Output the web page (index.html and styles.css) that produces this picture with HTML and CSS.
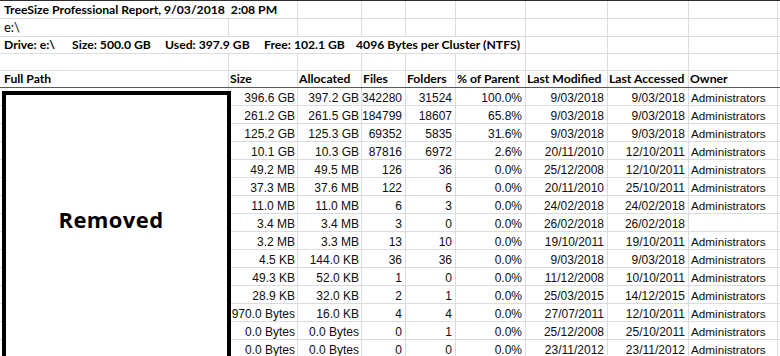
FILE: index.html
```html
<!DOCTYPE html>
<html>
<head>
<meta charset="utf-8">
<link rel="stylesheet" href="styles.css">
</head>
<body>
<div class="sheet">
  <div class="row r18 cal">
    <div class="cell span2 pa bold">TreeSize Professional Report, 9/03/2018  2:08 PM</div>
    <div class="cell"></div><div class="cell"></div><div class="cell"></div><div class="cell"></div><div class="cell"></div><div class="cell"></div><div class="cell"></div>
  </div>
  <div class="row r18 cal">
    <div class="cell pa big">e:\</div>
    <div class="cell"></div><div class="cell"></div><div class="cell"></div><div class="cell"></div><div class="cell"></div><div class="cell"></div><div class="cell"></div><div class="cell"></div>
  </div>
  <div class="row r17 cal">
    <div class="cell span6 pa bold drive"><span class="d1">Drive: e:\</span><span class="d2">Size: 500.0 GB</span><span class="d3">Used: 397.9 GB</span><span class="d4">Free: 102.1 GB</span><span>4096 Bytes per Cluster (NTFS)</span></div>
    <div class="cell"></div><div class="cell"></div><div class="cell"></div><div class="cell"></div>
  </div>
  <div class="row r17">
    <div class="cell"></div><div class="cell"></div><div class="cell"></div><div class="cell"></div><div class="cell"></div><div class="cell"></div><div class="cell"></div><div class="cell"></div><div class="cell"></div>
  </div>
  <div class="row r17 cal head">
    <div class="cell pa">Full Path</div>
    <div class="cell ph">Size</div>
    <div class="cell ph">Allocated</div>
    <div class="cell ph">Files</div>
    <div class="cell ph">Folders</div>
    <div class="cell ph">% of Parent</div>
    <div class="cell ph">Last Modified</div>
    <div class="cell ph">Last Accessed</div>
    <div class="cell ph">Owner</div>
  </div>

  <div class="row data"><div class="cell"></div><div class="cell num">396.6 GB</div><div class="cell num">397.2 GB</div><div class="cell num">342280</div><div class="cell num">31524</div><div class="cell num">100.0%</div><div class="cell num">9/03/2018</div><div class="cell num">9/03/2018</div><div class="cell txt">Administrators</div></div>
  <div class="row data"><div class="cell"></div><div class="cell num">261.2 GB</div><div class="cell num">261.5 GB</div><div class="cell num">184799</div><div class="cell num">18607</div><div class="cell num">65.8%</div><div class="cell num">9/03/2018</div><div class="cell num">9/03/2018</div><div class="cell txt">Administrators</div></div>
  <div class="row data"><div class="cell"></div><div class="cell num">125.2 GB</div><div class="cell num">125.3 GB</div><div class="cell num">69352</div><div class="cell num">5835</div><div class="cell num">31.6%</div><div class="cell num">9/03/2018</div><div class="cell num">9/03/2018</div><div class="cell txt">Administrators</div></div>
  <div class="row data"><div class="cell"></div><div class="cell num">10.1 GB</div><div class="cell num">10.3 GB</div><div class="cell num">87816</div><div class="cell num">6972</div><div class="cell num">2.6%</div><div class="cell num">20/11/2010</div><div class="cell num">12/10/2011</div><div class="cell txt">Administrators</div></div>
  <div class="row data"><div class="cell"></div><div class="cell num">49.2 MB</div><div class="cell num">49.5 MB</div><div class="cell num">126</div><div class="cell num">36</div><div class="cell num">0.0%</div><div class="cell num">25/12/2008</div><div class="cell num">12/10/2011</div><div class="cell txt">Administrators</div></div>
  <div class="row data"><div class="cell"></div><div class="cell num">37.3 MB</div><div class="cell num">37.6 MB</div><div class="cell num">122</div><div class="cell num">6</div><div class="cell num">0.0%</div><div class="cell num">20/11/2010</div><div class="cell num">25/10/2011</div><div class="cell txt">Administrators</div></div>
  <div class="row data"><div class="cell"></div><div class="cell num">11.0 MB</div><div class="cell num">11.0 MB</div><div class="cell num">6</div><div class="cell num">3</div><div class="cell num">0.0%</div><div class="cell num">24/02/2018</div><div class="cell num">24/02/2018</div><div class="cell txt">Administrators</div></div>
  <div class="row data"><div class="cell"></div><div class="cell num">3.4 MB</div><div class="cell num">3.4 MB</div><div class="cell num">3</div><div class="cell num">0</div><div class="cell num">0.0%</div><div class="cell num">26/02/2018</div><div class="cell num">26/02/2018</div><div class="cell txt"></div></div>
  <div class="row data"><div class="cell"></div><div class="cell num">3.2 MB</div><div class="cell num">3.3 MB</div><div class="cell num">13</div><div class="cell num">10</div><div class="cell num">0.0%</div><div class="cell num">19/10/2011</div><div class="cell num">19/10/2011</div><div class="cell txt">Administrators</div></div>
  <div class="row data"><div class="cell"></div><div class="cell num">4.5 KB</div><div class="cell num">144.0 KB</div><div class="cell num">36</div><div class="cell num">36</div><div class="cell num">0.0%</div><div class="cell num">9/03/2018</div><div class="cell num">9/03/2018</div><div class="cell txt">Administrators</div></div>
  <div class="row data"><div class="cell"></div><div class="cell num">49.3 KB</div><div class="cell num">52.0 KB</div><div class="cell num">1</div><div class="cell num">0</div><div class="cell num">0.0%</div><div class="cell num">11/12/2008</div><div class="cell num">10/10/2011</div><div class="cell txt">Administrators</div></div>
  <div class="row data"><div class="cell"></div><div class="cell num">28.9 KB</div><div class="cell num">32.0 KB</div><div class="cell num">2</div><div class="cell num">1</div><div class="cell num">0.0%</div><div class="cell num">25/03/2015</div><div class="cell num">14/12/2015</div><div class="cell txt">Administrators</div></div>
  <div class="row data"><div class="cell"></div><div class="cell num">970.0 Bytes</div><div class="cell num">16.0 KB</div><div class="cell num">4</div><div class="cell num">4</div><div class="cell num">0.0%</div><div class="cell num">27/07/2011</div><div class="cell num">12/10/2011</div><div class="cell txt">Administrators</div></div>
  <div class="row data"><div class="cell"></div><div class="cell num">0.0 Bytes</div><div class="cell num">0.0 Bytes</div><div class="cell num">0</div><div class="cell num">1</div><div class="cell num">0.0%</div><div class="cell num">25/12/2008</div><div class="cell num">25/10/2011</div><div class="cell txt">Administrators</div></div>
  <div class="row data"><div class="cell"></div><div class="cell num">0.0 Bytes</div><div class="cell num">0.0 Bytes</div><div class="cell num">0</div><div class="cell num">0</div><div class="cell num">0.0%</div><div class="cell num">23/11/2012</div><div class="cell num">23/11/2012</div><div class="cell txt">Administrators</div></div>

  <div class="redact"><span>Removed</span></div>
</div>
</body>
</html>
```
FILE: styles.css
```css
* { box-sizing: border-box; }

html, body {
  margin: 0;
  background: #ffffff;
}

body {
  width: 780px;
  height: 356px;
  overflow: hidden;
}

.sheet {
  position: relative;
  border-top: 1px solid #2e2e2e;
  font-family: "Liberation Sans", Arial, sans-serif;
  font-size: 12px;
  color: #0d0d0d;
}

.row {
  display: grid;
  grid-template-columns: 229px 69px 64px 44px 50px 70px 82px 81px 89px;
  border-bottom: 1px solid #dadcdf;
}

.cell {
  border-right: 1px solid #dadcdf;
  white-space: pre;
  overflow: visible;
  min-width: 0;
}

.span2 { grid-column: 1 / 3; }
.span6 { grid-column: 1 / 7; }

.r18 { height: 18px; line-height: 17px; }
.r17 { height: 17px; line-height: 16px; }

.cal {
  font-family: Lato, "Open Sans", sans-serif;
  font-size: 12.2px;
  color: #000000;
}

.big { font-size: 13px; }

.bold { font-weight: 700; }

.pa { padding-left: 4px; }
.ph { padding-left: 1px; }

.head {
  font-weight: 700;
  line-height: 15px;
  border-bottom: 1px solid #5a5a5a;
}

.drive span { display: inline-block; }
.drive .d1 { width: 68px; }
.drive .d2 { width: 93px; }
.drive .d3 { width: 99px; }
.drive .d4 { width: 92px; }

.data {
  height: 18px;
}

.data .cell {
  padding-top: 3px;
  line-height: 14px;
}

.num {
  text-align: right;
  padding-right: 3px;
}

.data .cell:nth-child(2),
.data .cell:nth-child(3) {
  padding-right: 2px;
}

.txt {
  padding-left: 2px;
  font-size: 11.7px;
}

.redact {
  position: absolute;
  left: 2px;
  top: 90px;
  width: 229px;
  height: 270px;
  border: 4px solid #000000;
  background: #ffffff;
  display: flex;
  align-items: center;
  justify-content: center;
  padding-right: 11px;
  padding-bottom: 15px;
}

.redact span {
  font-family: "Open Sans", Lato, sans-serif;
  font-weight: 700;
  font-size: 22px;
  letter-spacing: 0.4px;
  color: #000000;
}
```
